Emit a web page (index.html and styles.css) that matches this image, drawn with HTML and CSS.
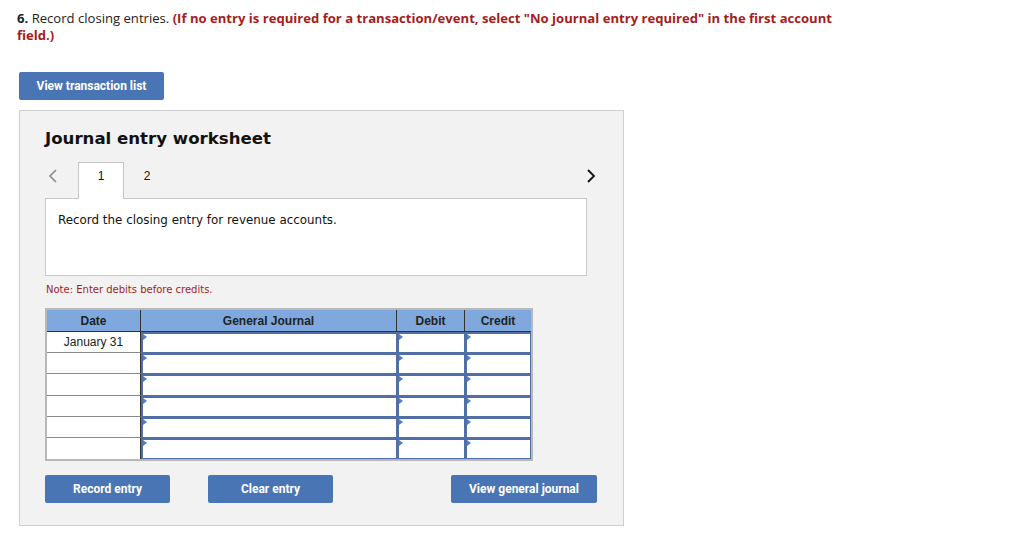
FILE: index.html
```html
<!DOCTYPE html>
<html>
<head>
<meta charset="utf-8">
<link rel="stylesheet" href="styles.css">
</head>
<body>
<div class="page">
  <p class="question"><b>6.</b> Record closing entries. <span class="hint">(If no entry is required for a transaction/event, select "No journal entry required" in the first account field.)</span></p>
  <button class="btn btn-list">View transaction list</button>
  <div class="panel">
    <h2 class="title">Journal entry worksheet</h2>
    <div class="tabs">
      <span class="arrow prev"><svg width="10" height="16" viewBox="0 0 10 16"><path d="M8 2 L2 8 L8 14" fill="none" stroke="#8a8a8a" stroke-width="1.6"/></svg></span>
      <span class="tab active">1</span>
      <span class="tab">2</span>
      <span class="arrow next"><svg width="10" height="16" viewBox="0 0 10 16"><path d="M2 2 L8 8 L2 14" fill="none" stroke="#111" stroke-width="1.8"/></svg></span>
    </div>
    <div class="desc">Record the closing entry for revenue accounts.</div>
    <p class="note">Note: Enter debits before credits.</p>
    <div class="jtable">
      <div class="th">Date</div>
      <div class="th">General Journal</div>
      <div class="th">Debit</div>
      <div class="th last">Credit</div>

      <div class="date">January 31</div>
      <div class="cell"><div class="inp"></div></div>
      <div class="cell"><div class="inp"></div></div>
      <div class="cell"><div class="inp"></div></div>

      <div class="date"></div>
      <div class="cell"><div class="inp"></div></div>
      <div class="cell"><div class="inp"></div></div>
      <div class="cell"><div class="inp"></div></div>

      <div class="date"></div>
      <div class="cell"><div class="inp"></div></div>
      <div class="cell"><div class="inp"></div></div>
      <div class="cell"><div class="inp"></div></div>

      <div class="date"></div>
      <div class="cell"><div class="inp"></div></div>
      <div class="cell"><div class="inp"></div></div>
      <div class="cell"><div class="inp"></div></div>

      <div class="date"></div>
      <div class="cell"><div class="inp"></div></div>
      <div class="cell"><div class="inp"></div></div>
      <div class="cell"><div class="inp"></div></div>

      <div class="date lastrow"></div>
      <div class="cell"><div class="inp"></div></div>
      <div class="cell"><div class="inp"></div></div>
      <div class="cell"><div class="inp"></div></div>
    </div>
    <div class="actions">
      <div class="group">
        <button class="btn btn-record">Record entry</button>
        <button class="btn btn-clear">Clear entry</button>
      </div>
      <button class="btn btn-view">View general journal</button>
    </div>
  </div>
</div>
</body>
</html>
```

FILE: styles.css
```css
* { box-sizing: border-box; }
html, body { margin: 0; padding: 0; background: #fff; }
.page {
  padding: 10px 0 0 19px;
  font-family: "Open Sans", "Liberation Sans", sans-serif;
}
.question {
  margin: 0 0 28px -2px;
  font-size: 13.1px;
  line-height: 17px;
  color: #222;
  width: 840px;
}
.question b { font-weight: 700; }
.hint { color: #a51c1c; font-weight: 700; }

.btn {
  display: block;
  height: 28px;
  border: none;
  border-radius: 2px;
  background: #4a75b4;
  color: #fff;
  font-family: Roboto, "Liberation Sans", sans-serif;
  font-weight: 700;
  font-size: 12px;
  padding: 0;
  text-align: center;
}
.btn-list { width: 145px; }

.panel {
  margin-top: 10px;
  width: 605px;
  height: 416px;
  background: #f2f2f2;
  border: 1px solid #cfcfcf;
  padding: 18px 0 0 25px;
  font-family: "DejaVu Sans", Verdana, sans-serif;
}
.title {
  margin: 0;
  font-size: 16.6px;
  line-height: 20px;
  font-weight: 700;
  color: #111;
}
.tabs {
  margin-top: 13px;
  display: flex;
  align-items: stretch;
  width: 552px;
  height: 37px;
  position: relative;
  z-index: 1;
  margin-bottom: -1px;
}
.arrow { display: flex; align-items: flex-start; padding-top: 6px; }
.prev { width: 33px; padding-left: 3px; }
.next { margin-left: auto; padding-right: 1px; }
.tab {
  width: 46px;
  display: flex;
  align-items: flex-start;
  justify-content: center;
  padding-top: 7px;
  line-height: 14px;
  font-family: "Liberation Sans", Arial, sans-serif;
  font-size: 12px;
  color: #111;
}
.tab.active {
  background: #fff;
  border: 1px solid #c4c4c4;
  border-bottom: none;
  padding-top: 6px;
}
.desc {
  width: 542px;
  height: 78px;
  background: #fff;
  border: 1px solid #c8c8c8;
  padding: 13px 12px;
  font-size: 11.9px;
  line-height: 16px;
  color: #111;
}
.note {
  margin: 7px 0 0 1px;
  font-size: 10px;
  line-height: 13px;
  color: #a51c1c;
}
.jtable {
  margin-top: 12px;
  width: 488px;
  display: grid;
  grid-template-columns: 94px 256px 68px 66px;
  grid-template-rows: 22px 21px 21px 22px 21px 21px 21px;
  border: 2px solid #b8b8b8;
  background: #fff;
  font-family: "Liberation Sans", Arial, sans-serif;
  font-size: 12px;
}
.th {
  background: #7fa9de;
  border-right: 1px solid #333;
  border-bottom: 1px solid #333;
  font-weight: 700;
  color: #222;
  display: flex;
  align-items: center;
  justify-content: center;
}
.th.last { border-right: none; }
.date {
  border-right: 1px solid #333;
  border-bottom: 1px solid #8a8a8a;
  display: flex;
  align-items: center;
  justify-content: center;
  color: #222;
}
.date.lastrow { border-bottom: none; }
.cell { padding: 0; }
.inp {
  position: relative;
  height: 100%;
  background: #fff;
  border: 1px solid #4f6fa6;
  border-top-width: 2px;
  border-left-width: 2px;
}
.inp::before {
  content: "";
  position: absolute;
  top: 0;
  left: 0;
  border-left: 4px solid #4a80cc;
  border-top: 3px solid transparent;
  border-bottom: 3px solid transparent;
}
.actions {
  margin-top: 14px;
  width: 552px;
  display: flex;
  justify-content: space-between;
}
.group { display: flex; gap: 38px; }
.btn-record { width: 125px; }
.btn-clear { width: 125px; }
.btn-view { width: 146px; }
```
